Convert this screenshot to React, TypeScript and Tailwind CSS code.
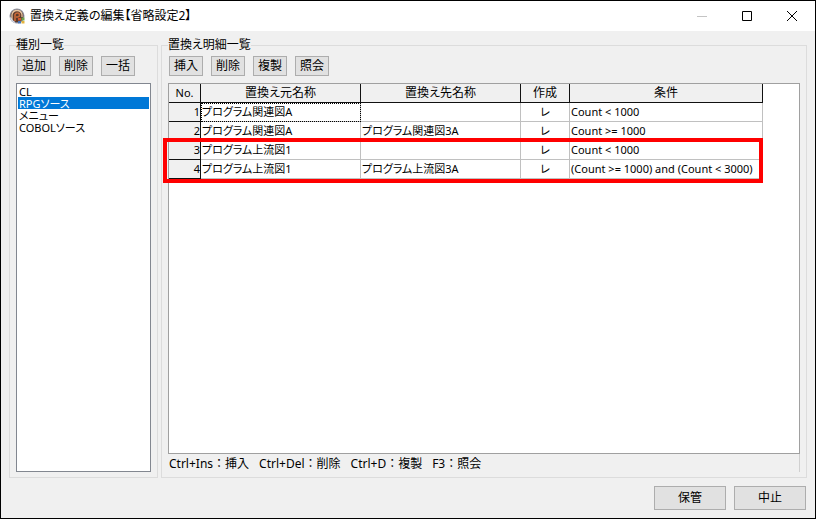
import React, { useState } from "react";

type Detail = {
  from: string;
  to: string;
  make: string;
  condition: string;
};

const kinds = ["CL", "RPGソース", "メニュー", "COBOLソース"];

const details: Detail[] = [
  { from: "プログラム関連図A", to: "", make: "レ", condition: "Count < 1000" },
  { from: "プログラム関連図A", to: "プログラム関連図3A", make: "レ", condition: "Count >= 1000" },
  { from: "プログラム上流図1", to: "", make: "レ", condition: "Count < 1000" },
  { from: "プログラム上流図1", to: "プログラム上流図3A", make: "レ", condition: "(Count >= 1000) and (Count < 3000)" },
];

const hints = ["Ctrl+Ins：挿入", "Ctrl+Del：削除", "Ctrl+D：複製", "F3：照会"];

const AppIcon = () => (
  <svg viewBox="0 0 16 16" className="w-4 h-4 shrink-0" aria-hidden="true">
    <circle cx="8" cy="8" r="7.5" fill="#8d8f9c" />
    <circle cx="8" cy="8" r="6.3" fill="#5b3a2c" />
    <path d="M3 12V6.500Q4 2.500 8 2.500T13 6.500V9" fill="none" stroke="#e6c4a0" strokeWidth="1.300" />
    <path d="M6 13V6.500Q6.500 5 8.500 5T10.500 7 8.500 9H7" fill="none" stroke="#c96a3a" strokeWidth="1.600" />
    <path d="M1.500 9.500Q2.500 13 6 14.500" fill="none" stroke="#d8dbe6" strokeWidth="1.200" />
    <path d="M9 10h3v2.500H9z" fill="#d0552f" />
    <path d="M12.500 9.500H15.500V12.500H12.500z" fill="#6fa04a" />
    <path d="M9 13h3v2.500H9z" fill="#4472b8" />
    <path d="M12.500 13H15.500V15.500H12.500z" fill="#e3b23c" />
  </svg>
);

const TitleBar = () => (
  <header className="flex h-[30px] shrink-0 items-center bg-white pl-2 pr-px">
    <AppIcon />
    <h1 className="flex-1 pl-[5px] text-[12px]">置換え定義の編集【省略設定2】</h1>
    <button type="button" disabled aria-label="最小化" className="flex h-full w-[45px] items-center justify-center text-[#c4c4c4]">
      <svg width="10" height="10" viewBox="0 0 10 10" stroke="currentColor">
        <path d="M0 5.500H10" />
      </svg>
    </button>
    <button type="button" aria-label="最大化" className="flex h-full w-[45px] items-center justify-center">
      <svg width="10" height="10" viewBox="0 0 10 10" fill="none" stroke="currentColor">
        <path d="M.5 .5H9.500V9.500H.5z" />
      </svg>
    </button>
    <button type="button" aria-label="閉じる" className="flex h-full w-[45px] items-center justify-center">
      <svg width="10" height="10" viewBox="0 0 10 10" stroke="currentColor">
        <path d="M0 0L10 10M10 0L0 10" />
      </svg>
    </button>
  </header>
);

const Toolbar = ({ labels }: { labels: string[] }) => (
  <div className="flex gap-2 pl-px">
    {labels.map((label) => (
      <button
        key={label}
        type="button"
        className="h-5 w-[34px] border border-[#adadad] bg-[#e1e1e1] text-[12px] leading-4 hover:bg-[#e5f1fb]"
      >
        {label}
      </button>
    ))}
  </div>
);

const Group = ({ title, className, children }: { title: string; className: string; children: React.ReactNode }) => (
  <fieldset className={`flex min-h-0 min-w-0 flex-col border border-[#dcdcdc] px-1.5 pt-[5px] ${className}`}>
    <legend className="text-[12px] leading-3">{title}</legend>
    {children}
  </fieldset>
);

const head = "border-r border-b border-[#111] bg-[#f0f0f0] p-0 text-center font-normal";
const cell = "border-r border-b border-[#c0c0c0] px-px whitespace-nowrap";

const DetailTable = () => (
  <div className="relative">
    <table className="w-[594px] table-fixed border-separate border-spacing-0 text-[11px] leading-4">
      <colgroup>
        <col className="w-[32px]" />
        <col className="w-[160px]" />
        <col className="w-[160px]" />
        <col className="w-[49px]" />
        <col className="w-[193px]" />
      </colgroup>
      <thead className="text-[12px]">
        <tr className="h-[19px]">
          <th className={`${head} text-[11px]`}>No.</th>
          <th className={head}>置換え元名称</th>
          <th className={head}>置換え先名称</th>
          <th className={head}>作成</th>
          <th className={head}>条件</th>
        </tr>
      </thead>
      <tbody>
        {details.map((row, i) => (
          <tr key={i} className="h-[19px]">
            <th className="border-r border-b border-[#111] bg-[#f0f0f0] p-0 text-right font-normal">{i + 1}</th>
            <td className={`${cell} ${i === 0 ? "outline-1 -outline-offset-1 outline-dotted outline-black" : ""}`}>{row.from}</td>
            <td className={cell}>{row.to}</td>
            <td className={`${cell} text-center`}>{row.make}</td>
            <td className={cell}>{row.condition}</td>
          </tr>
        ))}
      </tbody>
    </table>
    {/* marks the last two rows */}
    <div className="pointer-events-none absolute -left-1.5 top-[54px] h-[45px] w-[600px] border-4 border-[#f00]" />
  </div>
);

const App: React.FC = () => {
  const [kind, setKind] = useState("RPGソース");

  return (
    <div className="flex h-screen flex-col border border-black bg-[#f0f0f0] font-['Noto_Sans','Noto_Sans_CJK_JP',sans-serif] text-[12px] text-black [font-feature-settings:'palt']">
      <TitleBar />
      <main className="flex min-h-0 flex-1 gap-[3px] px-2 pt-2">
        <Group title="種別一覧" className="w-[149px] shrink-0 pb-[5px]">
          <Toolbar labels={["追加", "削除", "一括"]} />
          <select
            size={4}
            aria-label="種別一覧"
            value={kind}
            onChange={(e) => setKind(e.target.value)}
            className="mt-[7px] min-h-0 flex-1 overflow-hidden rounded-none border border-[#828790] bg-white p-px text-[11px] leading-3 outline-none"
          >
            {kinds.map((name) => (
              <option
                key={name}
                value={name}
                className="flex h-3 min-h-0 items-center p-0 px-px leading-3 checked:bg-[linear-gradient(#0078d7,#0078d7)] checked:[-webkit-text-fill-color:white]"
              >
                {name}
              </option>
            ))}
          </select>
        </Group>
        <Group title="置換え明細一覧" className="flex-1 pb-[5px]">
          <Toolbar labels={["挿入", "削除", "複製", "照会"]} />
          <div className="mt-[7px] min-h-0 flex-1 border border-[#a0a0a0] bg-white">
            <DetailTable />
          </div>
          <div className="flex h-[18px] items-center gap-2.5 border-r border-[#d0d0d0] pt-0.5 pl-px text-[12px] [font-feature-settings:normal]">
            {hints.map((hint) => (
              <span key={hint}>{hint}</span>
            ))}
          </div>
        </Group>
      </main>
      <footer className="flex shrink-0 justify-end gap-2 px-[9px] py-2">
        <button type="button" className="h-6 w-[72px] border border-[#adadad] bg-[#e1e1e1] hover:bg-[#e5f1fb]">
          保管
        </button>
        <button type="button" className="h-6 w-[72px] border border-[#adadad] bg-[#e1e1e1] hover:bg-[#e5f1fb]">
          中止
        </button>
      </footer>
    </div>
  );
};

export default App;
